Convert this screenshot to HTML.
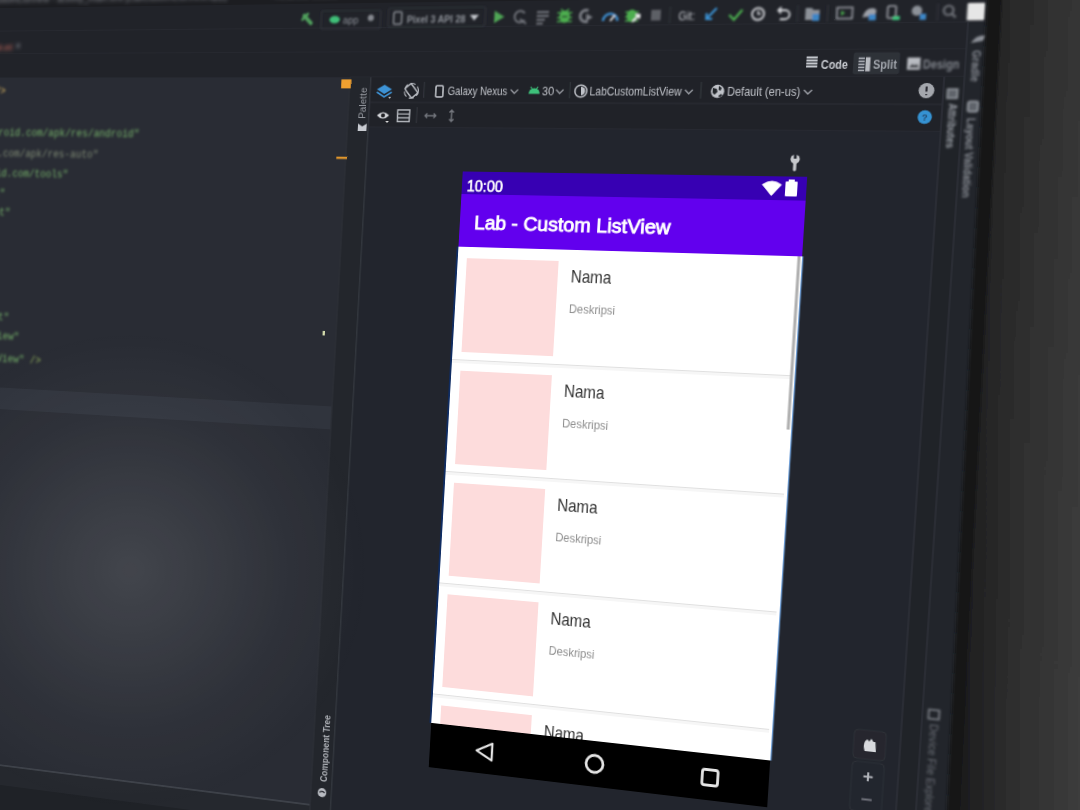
<!DOCTYPE html>
<html><head><meta charset="utf-8"><style>
html,body{margin:0;padding:0;width:1080px;height:810px;overflow:hidden;background:#2a2a2a;}
#scr{position:absolute;left:0;top:0;width:1200px;height:960px;transform-origin:0 0;transform:matrix3d(0.75865674,-0.01157962,0,-0.0001417575,-0.04181965,0.86135676,0,0.0000156551,0,0,1,0,-54.45609,-17.00083,0,1.00000000);}
#ov{position:absolute;left:0;top:0;}
</style></head><body>
<svg id="scr" width="1200" height="960" viewBox="0 0 1200 960">
<defs>
<filter id="b1" x="-20%" y="-20%" width="140%" height="140%"><feGaussianBlur stdDeviation="0.7"/></filter>
<filter id="b2" x="-20%" y="-20%" width="140%" height="140%"><feGaussianBlur stdDeviation="1.3"/></filter>
<filter id="b25" x="-20%" y="-20%" width="140%" height="140%"><feGaussianBlur stdDeviation="1.8"/></filter>
<filter id="b3" x="-20%" y="-20%" width="140%" height="140%"><feGaussianBlur stdDeviation="2.2"/></filter>
</defs>
<g transform="translate(640,210)">
<rect x="-640.0" y="-210.0" width="1180.0" height="960.0" fill="#202228" />
<rect x="-640.0" y="-210.0" width="1180.0" height="30.0" fill="#1c1d21" />
<rect x="-640.0" y="-180.0" width="1180.0" height="27.0" fill="#212329" />
<path d="M-640.0 -153.0H540.0" stroke="#2e3138" stroke-width="1"/>
<rect x="-640.0" y="-153.0" width="1180.0" height="26.0" fill="#212329" />
<path d="M-640.0 -127.0H540.0" stroke="#2c2f36" stroke-width="1"/>
<rect x="-640.0" y="-127.0" width="507.0" height="27.0" fill="#212329" />
<rect x="-640.0" y="-100.0" width="507.0" height="797.0" fill="#292c34" />
<rect x="-640.0" y="258.0" width="507.0" height="25.0" fill="#30343d" />
<g filter="url(#b2)">
<path d="M-640.0 257.0H-133.0" stroke="#24272e" stroke-width="2.5"/>
</g>
<rect x="-640.0" y="697.0" width="507.0" height="63.0" fill="#25282e" />
<rect x="-640.0" y="720.0" width="507.0" height="40.0" fill="#1f2227" />
<path d="M-640.0 697.0H-133.0" stroke="#464a52" stroke-width="1.6"/>
<rect x="-133.0" y="-127.0" width="673.0" height="27.0" fill="#212329" />
<path d="M-133.0 -100.0H540.0" stroke="#2c2f36" stroke-width="1"/>
<rect x="-133.0" y="-100.0" width="24.3" height="860.0" fill="#23262c" />
<path d="M-133.0 -100.0V760.0" stroke="#2c2f36" stroke-width="1.5"/>
<path d="M-108.7 -100.0V760.0" stroke="#43464e" stroke-width="1.6"/>
<rect x="-108.7" y="-100.0" width="594.7" height="53.5" fill="#202228" />
<path d="M-108.7 -73.0H486.0" stroke="#2c2f36" stroke-width="1"/>
<path d="M-108.7 -46.5H486.0" stroke="#2c2f36" stroke-width="1"/>
<rect x="-108.7" y="-46.5" width="594.7" height="806.5" fill="#22252d" />
<rect x="486.0" y="-100.0" width="19.0" height="860.0" fill="#202328" />
<path d="M486.0 -100.0V760.0" stroke="#2e3139" stroke-width="1.5"/>
<rect x="505.0" y="-153.0" width="35.0" height="913.0" fill="#22252b" />
<path d="M505.0 -153.0V760.0" stroke="#2e3139" stroke-width="1.5"/>
<path d="M-0.9 80.0V592.0" stroke="#0f2d64" stroke-width="2"/>
<path d="M360.6 80.0V592.0" stroke="#6f9fd8" stroke-width="1.4"/>
<clipPath id="pc"><rect x="0" y="0" width="360" height="640"/></clipPath><g clip-path="url(#pc)">
<rect x="0.0" y="0.0" width="360.0" height="640.0" fill="#ffffff" />
<rect x="0.0" y="0.0" width="360.0" height="24.0" fill="#3700b3" />
<text x="5.5" y="21.0" font-family="Liberation Sans" font-size="16" font-weight="normal" fill="#fff" textLength="39.5" lengthAdjust="spacingAndGlyphs" stroke="#fff" stroke-width="0.6">10:00</text>
<path d="M316 8.5 Q325.5 1.5 335 8.5 L325.5 19.5 Z" fill="#fff" stroke="#fff" stroke-width="0.8" stroke-linejoin="round"/>
<rect x="339.0" y="5.0" width="12.0" height="15.0" fill="#fff" rx="1"/>
<rect x="342.0" y="3.0" width="6.0" height="3.0" fill="#fff" />
<rect x="0.0" y="24.0" width="360.0" height="56.0" fill="#6200ee" />
<text x="16.0" y="61.0" font-family="Liberation Sans" font-size="20.5" font-weight="normal" fill="#fff" textLength="209.5" lengthAdjust="spacingAndGlyphs" stroke="#fff" stroke-width="0.9">Lab - Custom ListView</text>
<rect x="10.0" y="92.0" width="100.0" height="100.0" fill="#fddcdc" />
<text x="124.0" y="113.8" font-family="Liberation Sans" font-size="17.5" font-weight="normal" fill="#333" textLength="43.0" lengthAdjust="spacingAndGlyphs" >Nama</text>
<text x="124.0" y="146.5" font-family="Liberation Sans" font-size="12" font-weight="normal" fill="#8d8d8d" textLength="49.0" lengthAdjust="spacingAndGlyphs" >Deskripsi</text>
<path d="M0.0 200.5H357.0" stroke="#dcdcdc" stroke-width="0.9"/>
<rect x="0.0" y="201.0" width="357.0" height="3.0" fill="#f6f6f6" />
<rect x="10.0" y="212.0" width="100.0" height="100.0" fill="#fddcdc" />
<text x="124.0" y="233.8" font-family="Liberation Sans" font-size="17.5" font-weight="normal" fill="#333" textLength="43.0" lengthAdjust="spacingAndGlyphs" >Nama</text>
<text x="124.0" y="266.5" font-family="Liberation Sans" font-size="12" font-weight="normal" fill="#8d8d8d" textLength="49.0" lengthAdjust="spacingAndGlyphs" >Deskripsi</text>
<path d="M0.0 320.5H357.0" stroke="#dcdcdc" stroke-width="0.9"/>
<rect x="0.0" y="321.0" width="357.0" height="3.0" fill="#f6f6f6" />
<rect x="10.0" y="332.0" width="100.0" height="100.0" fill="#fddcdc" />
<text x="124.0" y="353.8" font-family="Liberation Sans" font-size="17.5" font-weight="normal" fill="#333" textLength="43.0" lengthAdjust="spacingAndGlyphs" >Nama</text>
<text x="124.0" y="386.5" font-family="Liberation Sans" font-size="12" font-weight="normal" fill="#8d8d8d" textLength="49.0" lengthAdjust="spacingAndGlyphs" >Deskripsi</text>
<path d="M0.0 440.5H357.0" stroke="#dcdcdc" stroke-width="0.9"/>
<rect x="0.0" y="441.0" width="357.0" height="3.0" fill="#f6f6f6" />
<rect x="10.0" y="452.0" width="100.0" height="100.0" fill="#fddcdc" />
<text x="124.0" y="473.8" font-family="Liberation Sans" font-size="17.5" font-weight="normal" fill="#333" textLength="43.0" lengthAdjust="spacingAndGlyphs" >Nama</text>
<text x="124.0" y="506.5" font-family="Liberation Sans" font-size="12" font-weight="normal" fill="#8d8d8d" textLength="49.0" lengthAdjust="spacingAndGlyphs" >Deskripsi</text>
<path d="M0.0 560.5H357.0" stroke="#dcdcdc" stroke-width="0.9"/>
<rect x="0.0" y="561.0" width="357.0" height="3.0" fill="#f6f6f6" />
<rect x="10.0" y="572.0" width="100.0" height="100.0" fill="#fddcdc" />
<text x="124.0" y="593.8" font-family="Liberation Sans" font-size="17.5" font-weight="normal" fill="#333" textLength="43.0" lengthAdjust="spacingAndGlyphs" >Nama</text>
<text x="124.0" y="626.5" font-family="Liberation Sans" font-size="12" font-weight="normal" fill="#8d8d8d" textLength="49.0" lengthAdjust="spacingAndGlyphs" >Deskripsi</text>
<path d="M0.0 680.5H357.0" stroke="#dcdcdc" stroke-width="0.9"/>
<rect x="0.0" y="681.0" width="357.0" height="3.0" fill="#f6f6f6" />
<rect x="355.5" y="80.0" width="3.0" height="175.0" fill="#b0b0b0" />
<rect x="0.0" y="592.0" width="360.0" height="48.0" fill="#000" />
<g filter="url(#b1)" stroke="#e6e6e6" fill="none">
<path d="M69 607 L69 625 L52 616 Z" stroke-width="2.4" stroke-linejoin="round"/>
<circle cx="180" cy="616" r="9" stroke-width="2.8"/>
<rect x="292.5" y="608.5" width="16" height="16" rx="2.5" stroke-width="2.8"/>
</g>
</g>
<g filter="url(#b3)" fill="#8a8d94" font-family="Liberation Sans" font-size="11">
<text x="-600" y="-186">LabCustomListView - activity_main.xml [LabCustomListView.app]</text>
<text x="-230" y="-186" fill="#7d8088">- Android Studio</text>
</g>
<g filter="url(#b2)">
<path d="M-190 -167 L-182 -159" stroke="#4f9e5c" stroke-width="4.5" stroke-linecap="round"/><path d="M-192 -163 L-186 -169" stroke="#4f9e5c" stroke-width="3" stroke-linecap="round"/>
<rect x="-170" y="-172" width="68" height="19.5" rx="2" fill="none" stroke="#33363d" stroke-width="1.2"/>
<ellipse cx="-154.5" cy="-162.5" rx="6" ry="4" fill="#3fbf78"/>
<text x="-145.0" y="-158.5" font-family="Liberation Sans" font-size="11" font-weight="normal" fill="#8c9097" textLength="18.0" lengthAdjust="spacingAndGlyphs" >app</text>
<circle cx="-113" cy="-164" r="3.5" fill="#85888f"/>
<rect x="-93" y="-174" width="108" height="20" rx="2" fill="none" stroke="#33363d" stroke-width="1.2"/>
<rect x="-87" y="-170" width="9" height="13" rx="1.5" fill="none" stroke="#8c9097" stroke-width="1.6"/>
<text x="-72.0" y="-158.5" font-family="Liberation Sans" font-size="11.5" font-weight="bold" fill="#8c9097" textLength="65.5" lengthAdjust="spacingAndGlyphs" >Pixel 3 API 28</text>
<path d="M-2 -166 L8 -166 L3 -160 Z" fill="#c5c8ce"/>
<path d="M25 -170 L36 -163.5 L25 -157 Z" fill="#4fa655"/>
<path d="M58 -160 A6 6 0 1 1 58 -167" fill="none" stroke="#74777e" stroke-width="2"/><path d="M53 -161 L60 -156" stroke="#74777e" stroke-width="2"/>
<path d="M71 -168H84M71 -164H84M71 -160H80M71 -156H78" stroke="#74777e" stroke-width="1.8"/>
<ellipse cx="101" cy="-163" rx="5.5" ry="6.5" fill="#4dae50"/><path d="M93 -167H109M93 -162H109M93 -158H109M97 -171L99 -168M105 -171L103 -168" stroke="#4dae50" stroke-width="1.5"/><path d="M98 -163H104" stroke="#1e2a20" stroke-width="1.3"/>
<path d="M126 -169 A6 6 0 1 0 126 -158" fill="none" stroke="#7a7d84" stroke-width="3"/><path d="M124 -166 L131 -162 L124 -158 Z" fill="#7a7d84"/>
<path d="M142 -158 A7.5 7.5 0 0 1 157 -158" fill="none" stroke="#3d8fd1" stroke-width="2.6"/><path d="M149.5 -158 L154 -164" stroke="#e8e8e8" stroke-width="2"/>
<ellipse cx="172" cy="-163" rx="5.5" ry="6.5" fill="#4dae50"/><path d="M165 -167H179M165 -162H179M165 -158H179" stroke="#4dae50" stroke-width="1.5"/><path d="M173 -157 L180 -164 M176 -164H180V-160" stroke="#f0f0f0" stroke-width="1.8" fill="none"/>
<rect x="192.0" y="-169.0" width="10.0" height="11.0" fill="#5d6066" />
<path d="M211.5 -172.0V-155.0" stroke="#33363d" stroke-width="1.2"/>
<text x="220.3" y="-158.5" font-family="Liberation Sans" font-size="12" font-weight="normal" fill="#c5c8ce" textLength="16.9" lengthAdjust="spacingAndGlyphs" >Git:</text>
<path d="M259 -170 L249 -159 M249 -165 V-159 H255" stroke="#3b93d6" stroke-width="2.2" fill="none"/>
<path d="M272 -163 L277 -158 L285 -168" stroke="#4caf50" stroke-width="2.4" fill="none"/>
<circle cx="301" cy="-163.5" r="6" fill="none" stroke="#d5d7db" stroke-width="1.8"/><path d="M301 -167V-163.5H304" stroke="#d5d7db" stroke-width="1.5" fill="none"/>
<path d="M322 -167 H328 A4.5 4.5 0 0 1 328 -158 H323 M324 -170 L321 -167 L324 -164" stroke="#d5d7db" stroke-width="1.8" fill="none"/>
<path d="M340.3 -172.0V-155.0" stroke="#33363d" stroke-width="1.2"/>
<path d="M348 -169 H354 L356 -167 H362 V-157 H348 Z" fill="#8d9299"/><rect x="355" y="-163" width="7" height="7" fill="#3d86c6"/>
<path d="M369.9 -172.0V-155.0" stroke="#33363d" stroke-width="1.2"/>
<rect x="379" y="-169" width="15" height="11" fill="none" stroke="#9ea1a8" stroke-width="1.5"/><path d="M383 -166 L387 -163.5 L383 -161 Z" fill="#4caf50"/>
<path d="M404 -159 Q406 -168 413 -168 Q418 -168 417 -163 L412 -160 Z" fill="#9ea1a8"/><rect x="410" y="-162" width="7" height="6" fill="#3d86c6"/>
<rect x="428" y="-170" width="8" height="12" rx="1.5" fill="none" stroke="#9ea1a8" stroke-width="1.6"/><rect x="433" y="-160" width="7" height="4" fill="#3ec07a"/>
<circle cx="456" cy="-165" r="5" fill="#8d9299"/><rect x="459" y="-162" width="6" height="6" fill="#3d86c6"/>
<path d="M475.7 -172.0V-155.0" stroke="#33363d" stroke-width="1.2"/>
<circle cx="486" cy="-165" r="4.5" fill="none" stroke="#6e7178" stroke-width="2.2"/><path d="M489 -162 L493 -158" stroke="#6e7178" stroke-width="2.4"/>
<rect x="503.5" y="-172.0" width="16.5" height="17.0" fill="#e6e6e6" rx="1"/>
</g>
<g filter="url(#b3)">
<text x="-600.0" y="-131.0" font-family="Liberation Sans" font-size="11" font-weight="normal" fill="#c8695c" textLength="52.0" lengthAdjust="spacingAndGlyphs" >activity_main.xml</text>
<path d="M-543 -139 L-538 -134 M-538 -139 L-543 -134" stroke="#6e7178" stroke-width="1.4"/>
</g>
<g filter="url(#b1)">
<path d="M352 -119.5H363M352 -116.5H363M352 -113.5H363M352 -110.5H363" stroke="#c9ccd2" stroke-width="1.9"/>
<text x="366.6" y="-108.5" font-family="Liberation Sans" font-size="13" font-weight="bold" fill="#c9ccd2" textLength="26.3" lengthAdjust="spacingAndGlyphs" >Code</text>
<rect x="398.0" y="-124.2" width="44.8" height="21.4" fill="#2e3138" rx="2"/>
<path d="M403 -118.5H409M403 -115.5H409M403 -112.5H409M403 -109.5H409M403 -106.5H409" stroke="#b9bcc2" stroke-width="1.6"/><rect x="410" y="-119.5" width="4.5" height="14" fill="#b9bcc2"/>
<text x="417.3" y="-108.5" font-family="Liberation Sans" font-size="13" font-weight="bold" fill="#a3a7ae" textLength="22.9" lengthAdjust="spacingAndGlyphs" >Split</text>
</g><g filter="url(#b2)">
<rect x="450" y="-119" width="12.5" height="12" fill="#b9bcc2"/><path d="M451.5 -109 L455 -113 L457 -111 L459 -113 L461.5 -109 Z" fill="#2a2c32"/>
<text x="465.1" y="-108.5" font-family="Liberation Sans" font-size="13" font-weight="bold" fill="#7f838a" textLength="34.4" lengthAdjust="spacingAndGlyphs" >Design</text>
</g>
<g filter="url(#b1)">
<path d="M-101.5 -87 L-93 -92 L-84.5 -87 L-93 -82 Z" fill="#3d93d6"/><path d="M-101.5 -84 L-93 -79 L-84.5 -84" fill="none" stroke="#3d93d6" stroke-width="1.8"/><path d="M-88 -79 L-85 -79 L-86.5 -77 Z" fill="#ddd"/>
<rect x="-67" y="-92" width="9" height="13" rx="1.5" transform="rotate(-40 -62.5 -85.5)" fill="none" stroke="#b9bcc2" stroke-width="1.6"/><circle cx="-62.5" cy="-85.5" r="8" fill="none" stroke="#b9bcc2" stroke-width="1.1" stroke-dasharray="6 3"/>
<path d="M-48.3 -95.0V-78.0" stroke="#33363d" stroke-width="1.2"/>
<rect x="-35" y="-91" width="8" height="12" rx="1.3" fill="none" stroke="#c9ccd2" stroke-width="1.6"/>
<text x="-21.7" y="-81.5" font-family="Liberation Sans" font-size="12" font-weight="normal" fill="#c0c3c9" textLength="65.5" lengthAdjust="spacingAndGlyphs" >Galaxy Nexus</text>
<path d="M47.5 -87 L51.5 -83 L55.5 -87" fill="none" stroke="#9ea1a8" stroke-width="1.3"/>
<path d="M67 -82.5 A6 6 0 0 1 79 -82.5 Z" fill="#3ec07a"/><path d="M69 -90 L71 -87 M77 -90 L75 -87" stroke="#3ec07a" stroke-width="1.2"/>
<text x="81.6" y="-81.5" font-family="Liberation Sans" font-size="12" font-weight="normal" fill="#c0c3c9" textLength="12.9" lengthAdjust="spacingAndGlyphs" >30</text>
<path d="M96.5 -87 L100.5 -83 L104.5 -87" fill="none" stroke="#9ea1a8" stroke-width="1.3"/>
<path d="M111.3 -95.0V-78.0" stroke="#33363d" stroke-width="1.2"/>
<circle cx="123" cy="-85.5" r="6.3" fill="none" stroke="#c0c3c9" stroke-width="1.6"/><path d="M123 -90 A4.5 4.5 0 0 1 123 -81 Z" fill="#c0c3c9"/>
<text x="132.3" y="-81.5" font-family="Liberation Sans" font-size="12" font-weight="normal" fill="#c0c3c9" textLength="96.2" lengthAdjust="spacingAndGlyphs" >LabCustomListView</text>
<path d="M231.7 -87 L235.7 -83 L239.7 -87" fill="none" stroke="#9ea1a8" stroke-width="1.3"/>
<path d="M248.0 -95.0V-78.0" stroke="#33363d" stroke-width="1.2"/>
<circle cx="265" cy="-85.5" r="6.8" fill="#c0c3c9"/><path d="M260 -89 L264 -88 L265 -85 L262 -82 L260 -84 Z M266 -91 L269 -89 L268 -86 L266 -87 Z M266 -81 L269 -83 L270 -81 L267 -79.5 Z" fill="#22252b"/>
<text x="274.7" y="-81.5" font-family="Liberation Sans" font-size="12" font-weight="normal" fill="#c0c3c9" textLength="73.2" lengthAdjust="spacingAndGlyphs" >Default (en-us)</text>
<path d="M351.4 -87 L355.4 -83 L359.4 -87" fill="none" stroke="#9ea1a8" stroke-width="1.3"/>
<g><circle cx="470" cy="-86.5" r="7.5" fill="#a4a7ad"/><path d="M470 -90.5V-85.5M470 -83V-82" stroke="#2a2c32" stroke-width="2"/></g>
<path d="M-100 -59 Q-93 -66 -86 -59 Q-93 -52 -100 -59 Z" fill="#d5d7db"/><circle cx="-93" cy="-59" r="2.3" fill="#202228"/><path d="M-90 -53 L-86 -53 L-88 -51 Z" fill="#ddd"/>
<rect x="-76.5" y="-65" width="13.5" height="12.5" fill="none" stroke="#b9bcc2" stroke-width="1.5"/><path d="M-76.5 -60.7H-63M-76.5 -56.5H-63" stroke="#b9bcc2" stroke-width="1.3"/>
<path d="M-54.8 -68.0V-51.0" stroke="#33363d" stroke-width="1.2"/>
<path d="M-45.5 -59H-33.5M-43 -61.5L-45.5 -59L-43 -56.5M-36 -61.5L-33.5 -59L-36 -56.5" stroke="#74777e" stroke-width="1.5" fill="none"/>
<path d="M-16 -65V-53M-18.5 -62.5L-16 -65L-13.5 -62.5M-18.5 -55.5L-16 -53L-13.5 -55.5" stroke="#74777e" stroke-width="1.5" fill="none"/>
<g><circle cx="470" cy="-60.5" r="6.8" fill="#3592d2"/><text x="470" y="-57" font-family="Liberation Sans" font-size="9" font-weight="bold" fill="#23496e" text-anchor="middle">?</text></g>
</g>
<g filter="url(#b1)"><path d="M347 -7 V-15" stroke="#c6c8cc" stroke-width="3.2" stroke-linecap="round"/><circle cx="347" cy="-17.5" r="4.6" fill="#c6c8cc"/><rect x="345.6" y="-23" width="2.8" height="5" fill="#22252d"/></g>
<g filter="url(#b2)">
<rect x="490" y="-88" width="9.5" height="9" fill="#5f636a" stroke="#9a9ea5" stroke-width="1.4"/>
<text transform="translate(491.5,-74) rotate(90)" font-family="Liberation Sans" font-size="10.5" font-weight="bold" fill="#9a9ea5" textLength="44" lengthAdjust="spacingAndGlyphs">Attributes</text>
<path d="M509 -133 Q514 -142 523 -140 L520 -135 Z" fill="#8c9097"/>
<text transform="translate(511,-126) rotate(90)" font-family="Liberation Sans" font-size="10.5" font-weight="bold" fill="#8a8e95" textLength="31" lengthAdjust="spacingAndGlyphs">Gradle</text>
<rect x="510" y="-76" width="9.5" height="10" rx="2" fill="#5f636a" stroke="#9a9ea5" stroke-width="1.6"/>
<text transform="translate(510,-60) rotate(90)" font-family="Liberation Sans" font-size="10.5" font-weight="bold" fill="#8a8e95" textLength="78" lengthAdjust="spacingAndGlyphs">Layout Validation</text>
<rect x="511" y="524" width="10" height="9" fill="none" stroke="#8a8e95" stroke-width="1.4"/>
<text transform="translate(513,538) rotate(90)" font-family="Liberation Sans" font-size="10.5" fill="#6a6e75" textLength="92" lengthAdjust="spacingAndGlyphs">Device File Explorer</text>
</g>
<g filter="url(#b1)">
<rect x="441" y="551" width="31" height="29" rx="4" fill="#25282f" stroke="#2e3138"/>
<path d="M452 572 Q450 566 452 562 L454 560 L456 562 L458 559 L460 562 L462 562 L463 572 Z" fill="#d8dadd"/>
<rect x="441" y="583" width="31" height="50" rx="4" fill="#24272e" stroke="#2d3037"/>
<path d="M452.5 597.5H461.5M457 593V602" stroke="#b0b3b9" stroke-width="2"/>
<path d="M452 620.5H462" stroke="#70737a" stroke-width="2"/>
</g>
<g filter="url(#b25)" font-family="Liberation Mono" font-size="13.5">
<text x="-553.9" y="-81.2" fill="#d9b35e" text-anchor="end" xml:space="preserve" textLength="14.4" lengthAdjust="spacingAndGlyphs">?&gt;</text>
<text x="-568.3" y="-81.2" fill="#6a9a5b" text-anchor="end" xml:space="preserve" textLength="115.2" lengthAdjust="spacingAndGlyphs">encoding="utf-8"</text>
<text x="-381.0" y="-32.9" fill="#74b068" text-anchor="end" xml:space="preserve" textLength="266.4" lengthAdjust="spacingAndGlyphs">"schemas.android.com/apk/res/android"</text>
<text x="-647.4" y="-32.9" fill="#9876aa" text-anchor="end" xml:space="preserve" textLength="100.8" lengthAdjust="spacingAndGlyphs">xmlns:android=</text>
<text x="-431.0" y="-8.9" fill="#7f8a74" text-anchor="end" xml:space="preserve" textLength="244.8" lengthAdjust="spacingAndGlyphs">"schemas.android.com/apk/res-auto"</text>
<text x="-675.8" y="-8.9" fill="#9876aa" text-anchor="end" xml:space="preserve" textLength="72.0" lengthAdjust="spacingAndGlyphs">xmlns:app=</text>
<text x="-468.0" y="14.2" fill="#74b068" text-anchor="end" xml:space="preserve" textLength="194.4" lengthAdjust="spacingAndGlyphs">"schemas.android.com/tools"</text>
<text x="-662.4" y="14.2" fill="#9876aa" text-anchor="end" xml:space="preserve" textLength="86.4" lengthAdjust="spacingAndGlyphs">xmlns:tools=</text>
<text x="-548.0" y="36.8" fill="#74b068" text-anchor="end" xml:space="preserve" textLength="100.8" lengthAdjust="spacingAndGlyphs">"match_parent"</text>
<text x="-540.0" y="59.4" fill="#74b068" text-anchor="end" xml:space="preserve" textLength="100.8" lengthAdjust="spacingAndGlyphs">"match_parent"</text>
<text x="-535.0" y="179.9" fill="#74b068" text-anchor="end" xml:space="preserve" textLength="100.8" lengthAdjust="spacingAndGlyphs">"match_parent"</text>
<text x="-520.7" y="202.4" fill="#74b068" text-anchor="end" xml:space="preserve" textLength="108.0" lengthAdjust="spacingAndGlyphs">"@+id/listView"</text>
<text x="-491.0" y="228.0" fill="#8fae5a" text-anchor="end" xml:space="preserve" textLength="21.6" lengthAdjust="spacingAndGlyphs"> /&gt;</text>
<text x="-512.6" y="228.0" fill="#74b068" text-anchor="end" xml:space="preserve" textLength="108.0" lengthAdjust="spacingAndGlyphs">"@+id/listView"</text>
</g>
<rect x="-142.8" y="-97.7" width="11.3" height="9.7" fill="#f0a030" />
<rect x="-143.8" y="-14.0" width="12.8" height="2.5" fill="#e0962c" />
<rect x="-148.5" y="176" width="2.5" height="5" fill="#d8e0b0"/>
<g filter="url(#b1)">
<text transform="translate(-113.5,-55) rotate(-90)" font-family="Liberation Sans" font-size="10.5" fill="#9a9da4" textLength="34" lengthAdjust="spacingAndGlyphs">Palette</text>
<path d="M-121 -42 V-50 L-116 -47 L-111 -50 V-42 Z" fill="#c9ccd2"/>
<text transform="translate(-115.5,670) rotate(-90)" font-family="Liberation Sans" font-size="10.5" font-weight="bold" fill="#aeb1b7" textLength="74" lengthAdjust="spacingAndGlyphs">Component Tree</text>
<circle cx="-120" cy="682" r="5" fill="#b9bcc2"/><path d="M-123 -680 Q-120 -683 -117 -680" stroke="#25282e" stroke-width="1.5" fill="none" transform="translate(0,1362)"/>
</g>
</g>
</svg>
<svg id="ov" width="1080" height="810" viewBox="0 0 1080 810">
<defs>
<radialGradient id="glow" cx="130" cy="570" r="240" gradientUnits="userSpaceOnUse">
<stop offset="0" stop-color="#ffffff" stop-opacity="0.12"/>
<stop offset="0.3" stop-color="#ffffff" stop-opacity="0.08"/>
<stop offset="0.65" stop-color="#ffffff" stop-opacity="0.03"/>
<stop offset="1" stop-color="#ffffff" stop-opacity="0"/>
</radialGradient>
<linearGradient id="outg" x1="960" y1="0" x2="1080" y2="0" gradientUnits="userSpaceOnUse">
<stop offset="0" stop-color="#1c1c1d"/>
<stop offset="0.4" stop-color="#2d2d2d"/>
<stop offset="1" stop-color="#3c3c3c"/>
</linearGradient>
<linearGradient id="topd" x1="0" y1="0" x2="0" y2="810" gradientUnits="userSpaceOnUse">
<stop offset="0" stop-color="#000" stop-opacity="0.12"/>
<stop offset="0.5" stop-color="#000" stop-opacity="0.04"/>
<stop offset="1" stop-color="#000" stop-opacity="0"/>
</linearGradient>
<filter id="ob" x="-10%" y="-10%" width="120%" height="120%"><feGaussianBlur stdDeviation="1.5"/></filter>
</defs>
<rect x="0" y="0" width="1080" height="810" fill="url(#glow)"/>
<g filter="url(#ob)">
<polygon points="1002,-20 1100,-20 1100,830 958,830" fill="url(#outg)"/>
<polygon points="1002,-20 1100,-20 1100,830 958,830" fill="url(#topd)"/>
<polygon points="988,-20 1003,-20 959,830 946,830" fill="#151619"/>
</g>
</svg>

</body></html>
